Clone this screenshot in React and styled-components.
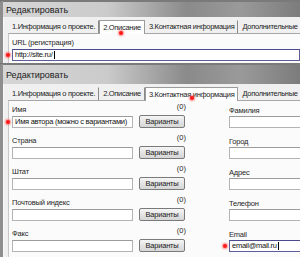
import styled, { createGlobalStyle } from 'styled-components';

const GlobalStyle = createGlobalStyle`
  html, body {
    margin: 0;
    padding: 0;
  }
  body {
    width: 300px;
    height: 257px;
    overflow: hidden;
    background: #6f6f6f;
    font-family: "Liberation Sans", Arial, sans-serif;
    color: #1e1e1e;
  }
`;

const tabs = ['1.Информация о проекте.', '2.Описание', '3.Контактная информация', 'Дополнительные'];

const rows = [
  { left: 'Имя', value: 'Имя автора (можно с вариантами)', dot: true, right: 'Фамилия' },
  { left: 'Страна', right: 'Город' },
  { left: 'Штат', right: 'Адрес' },
  { left: 'Почтовый индекс', right: 'Телефон' },
  { left: 'Факс', right: 'Email', rightValue: 'email@mail.ru', rightFocus: true },
];

const App = () => {
  return (
    <Page>
      <GlobalStyle />
      <Window height={63}>
        <TitleBar>Редактировать</TitleBar>
        <Body>
          <TabStrip>
            {tabs.map((t, i) => (
              <Tab key={t} selected={i === 1}>
                {t}
                {i === 1 && <Dot style={{ left: 19, top: 10 }} />}
              </Tab>
            ))}
          </TabStrip>
          <Panel>
            <Label>URL (регистрация)</Label>
            <Marked>
              <Dot style={{ left: -6, top: 4 }} />
              <Input focus wide>
                http://site.ru/<Caret />
              </Input>
            </Marked>
          </Panel>
        </Body>
      </Window>

      <Window height={194}>
        <TitleBar tall>Редактировать</TitleBar>
        <Body>
          <TabStrip>
            {tabs.map((t, i) => (
              <Tab key={t} selected={i === 2}>
                {t}
                {i === 2 && <Dot style={{ left: 44, top: 8 }} />}
              </Tab>
            ))}
          </TabStrip>
          <Panel>
            <Grid>
              {rows.map((r) => (
                <Row key={r.left}>
                  <LeftField>
                    <LabelLine>
                      <Label>{r.left}</Label>
                      <Count>(0)</Count>
                    </LabelLine>
                    <Line>
                      <Marked>
                        {r.dot && <Dot style={{ left: -6, top: 4 }} />}
                        <Input>{r.value}</Input>
                      </Marked>
                      <Button>Варианты</Button>
                    </Line>
                  </LeftField>
                  <RightField>
                    <Label>{r.right}</Label>
                    <Marked>
                      {r.rightFocus && <Dot style={{ left: -6, top: 4 }} />}
                      <Input wide focus={r.rightFocus}>
                        {r.rightValue}
                        {r.rightFocus && <Caret />}
                      </Input>
                    </Marked>
                  </RightField>
                </Row>
              ))}
            </Grid>
          </Panel>
        </Body>
      </Window>
    </Page>
  );
};

export default App;

const Page = styled.div`
  display: flex;
  flex-direction: column;
  width: 300px;
  height: 257px;
`;

const Window = styled.div`
  height: ${(p) => p.height}px;
  display: flex;
  flex-direction: column;
  border-left: 3px solid #8e8e8e;
  border-top: 2px solid #7a7a7a;
  border-top-left-radius: 3px;
  background: #efefef;
  overflow: hidden;
  box-sizing: border-box;
`;

const TitleBar = styled.div`
  height: ${(p) => (p.tall ? 19 : 15)}px;
  padding-left: 3px;
  font-size: 9px;
  line-height: ${(p) => (p.tall ? 21 : 16)}px;
  color: #202020;
  background: linear-gradient(to right, #d6d6d6 0%, #cbcbcb 35%, #8a8a8a 62%, #9a9a9a 80%, #7c7c7c 100%);
  flex-shrink: 0;
`;

const Body = styled.div`
  flex: 1;
  display: flex;
  flex-direction: column;
  padding: 2px 0 0 4px;
  background: #f0f0f0;
  border-left: 1px solid #fafafa;
`;

const TabStrip = styled.div`
  display: flex;
  align-items: flex-end;
  height: 14px;
  white-space: nowrap;
`;

const Tab = styled.div`
  position: relative;
  font-size: 7.5px;
  letter-spacing: -0.3px;
  line-height: ${(p) => (p.selected ? 13 : 12)}px;
  padding: 0 3px;
  background: ${(p) => (p.selected ? '#ffffff' : 'transparent')};
  border: 1px solid ${(p) => (p.selected ? '#9a9a9a' : 'transparent')};
  border-bottom: none;
  border-right: 1px solid ${(p) => (p.selected ? '#9a9a9a' : '#8a8a8a')};
  margin-bottom: ${(p) => (p.selected ? -1 : 0)}px;
  z-index: ${(p) => (p.selected ? 1 : 0)};
  color: #1c1c1c;
`;

const Panel = styled.div`
  flex: 1;
  background: #fbfbfb;
  border-top: 1px solid #a8a8a8;
  border-left: 1px solid #c8c8c8;
  padding: 5px 0 0 3px;
  display: flex;
  flex-direction: column;
  gap: 2px;
`;

const Grid = styled.div`
  display: flex;
  flex-direction: column;
  gap: 9px;
`;

const Row = styled.div`
  display: flex;
  align-items: flex-start;
`;

const LeftField = styled.div`
  width: 176px;
  display: flex;
  flex-direction: column;
  gap: 1px;
`;

const RightField = styled.div`
  margin-left: 44px;
  padding-top: 1px;
  flex: 1;
  display: flex;
  flex-direction: column;
  gap: 1px;
`;

const LabelLine = styled.div`
  display: flex;
  justify-content: space-between;
  align-items: flex-start;
`;

const Label = styled.div`
  font-size: 7.5px;
  letter-spacing: -0.2px;
  line-height: 8px;
  height: 8px;
  color: #262626;
  white-space: nowrap;
`;

const Count = styled.div`
  font-size: 7.5px;
  line-height: 8px;
  margin-top: -3px;
  margin-right: -1px;
  color: #262626;
`;

const Line = styled.div`
  display: flex;
  align-items: center;
  gap: 6px;
`;

const Marked = styled.div`
  position: relative;
  display: flex;
`;

const Input = styled.div`
  box-sizing: border-box;
  width: ${(p) => (p.wide ? '300px' : '121px')};
  height: 12px;
  background: #ffffff;
  border: 1px solid ${(p) => (p.focus ? '#5d5d9e' : '#b4b4b4')};
  border-top-color: ${(p) => (p.focus ? '#4a4a8c' : '#9c9c9c')};
  font-size: 7.5px;
  letter-spacing: -0.25px;
  line-height: 10px;
  padding-left: 2px;
  color: #111;
  white-space: nowrap;
  overflow: hidden;
  display: flex;
  align-items: center;
`;

const Caret = styled.span`
  display: inline-block;
  width: 1px;
  height: 8px;
  background: #000;
  margin-left: 1px;
`;

const Button = styled.div`
  box-sizing: border-box;
  width: 46px;
  height: 13px;
  border: 1px solid #7a7a7a;
  border-radius: 2px;
  background: linear-gradient(#f6f6f6, #e4e4e4 50%, #d6d6d6);
  font-size: 7.5px;
  letter-spacing: -0.2px;
  line-height: 11px;
  text-align: center;
  color: #1a1a1a;
`;

const Dot = styled.span`
  position: absolute;
  width: 4px;
  height: 4px;
  border-radius: 50%;
  background: #ff1a1a;
  box-shadow: 0 0 2px 1px rgba(255, 60, 60, 0.6);
  z-index: 2;
`;
